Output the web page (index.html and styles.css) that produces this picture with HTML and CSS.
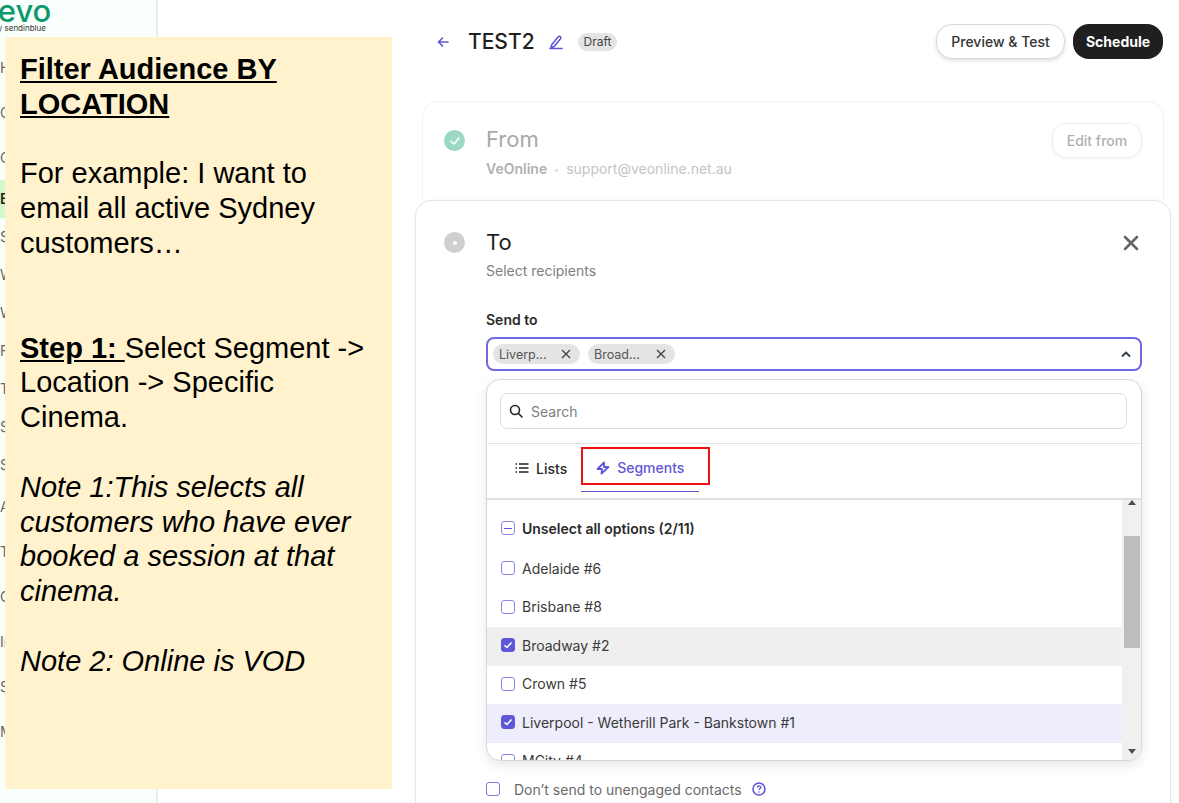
FILE: index.html
```html
<!DOCTYPE html>
<html lang="en">
<head>
<meta charset="UTF-8">
<meta name="viewport" content="width=device-width, initial-scale=1.0">
<title>TEST2 - Campaign</title>
<link rel="stylesheet" href="styles.css">
</head>
<body>

<aside class="sidebar">
    <div class="logo">
        <div class="logo-word">Brevo</div>
        <div class="logo-sub">by sendinblue</div>
    </div>
    <ul class="side-nav">
        <li>Home</li>
        <li>Contacts</li>
        <li>Campaigns</li>
        <li class="sub active">Email</li>
        <li class="sub">SMS</li>
        <li class="sub">WhatsApp</li>
        <li class="sub">Web push</li>
        <li class="sub">Facebook ads</li>
        <li class="sub">Templates</li>
        <li class="sub">Segments</li>
        <li class="sub">Statistics</li>
        <li>Automations</li>
        <li>Transactional</li>
        <li>Conversations</li>
        <li>Inbox</li>
        <li>Sales</li>
        <li>Meetings</li>
    </ul>
</aside>

<main class="main">
    <header class="top-bar">
        <svg class="back-icon" width="14" height="14" viewBox="0 0 14 14"><path d="M12 7H2.5M6.5 3 2.5 7l4 4" fill="none" stroke="#5f57d6" stroke-width="1.6" stroke-linecap="round" stroke-linejoin="round"/></svg>
        <h1 class="title">TEST2</h1>
        <svg class="edit-icon" width="16" height="16" viewBox="0 0 16 16"><path d="M3.5 11 10 3c.7-.8 1.6-.9 2.3-.3s.7 1.5.1 2.2L6 12.6l-3 .6zM2 14.5h12" fill="none" stroke="#5f57d6" stroke-width="1.6" stroke-linecap="round" stroke-linejoin="round"/></svg>
        <span class="draft-badge">Draft</span>
        <div class="top-actions">
            <button class="btn btn-light">Preview &amp; Test</button>
            <button class="btn btn-dark">Schedule</button>
        </div>
    </header>

    <section class="from-card">
        <span class="step-dot step-done">
            <svg width="12" height="12" viewBox="0 0 12 12"><path d="M2 6.3 5 9l5-6" fill="none" stroke="#fff" stroke-width="1.6" stroke-linecap="round" stroke-linejoin="round"/></svg>
        </span>
        <div class="from-text">
            <h2 class="from-title">From</h2>
            <p class="from-line"><b>VeOnline</b><i class="sep"></i>support@veonline.net.au</p>
        </div>
        <button class="edit-from">Edit from</button>
    </section>

    <section class="to-card">
        <div class="to-head">
            <span class="step-dot step-current"><i></i></span>
            <div class="to-text">
                <h2 class="to-title">To</h2>
                <p class="to-sub">Select recipients</p>
            </div>
            <svg class="close-icon" width="16" height="16" viewBox="0 0 16 16"><path d="M2 2l12 12M14 2 2 14" stroke="#666" stroke-width="2.6" stroke-linecap="round"/></svg>
        </div>

        <div class="send-block">
            <label class="send-label">Send to</label>
            <div class="send-field">
                <span class="chip">Liverp...<svg width="10" height="10" viewBox="0 0 10 10"><path d="M1 1l8 8M9 1 1 9" stroke="#444" stroke-width="1.4"/></svg></span>
                <span class="chip">Broad...<svg width="10" height="10" viewBox="0 0 10 10"><path d="M1 1l8 8M9 1 1 9" stroke="#444" stroke-width="1.4"/></svg></span>
                <svg class="chevron" width="10" height="7" viewBox="0 0 10 7"><path d="M1 5.5 5 1.5l4 4" fill="none" stroke="#2f3a4a" stroke-width="1.9"/></svg>
            </div>

            <div class="dropdown">
                <div class="search-wrap">
                    <div class="search-box">
                        <svg width="14" height="14" viewBox="0 0 14 14"><circle cx="6" cy="6" r="4.5" fill="none" stroke="#222" stroke-width="1.6"/><path d="M9.5 9.5 13 13" stroke="#222" stroke-width="1.6" stroke-linecap="round"/></svg>
                        <span>Search</span>
                    </div>
                </div>
                <div class="tabs">
                    <div class="tab">
                        <svg width="14" height="12" viewBox="0 0 14 12"><path d="M4 2h9.5M4 6h9.5M4 10h9.5" stroke="#222" stroke-width="1.4"/><path d="M.5 2h1.5M.5 6h1.5M.5 10h1.5" stroke="#222" stroke-width="1.6"/></svg>
                        Lists
                    </div>
                    <div class="tab tab-active">
                        <svg width="14" height="14" viewBox="0 0 14 14"><path d="M8 1.5 1.5 8H6l-.5 4.5L12.5 6H8z" fill="none" stroke="#5f57d6" stroke-width="1.8" stroke-linejoin="round"/></svg>
                        Segments
                    </div>
                    <div class="red-box"></div>
                </div>
                <div class="list-area">
                    <ul class="options">
                        <li class="option option-all"><span class="check check-some"></span>Unselect all options (2/11)</li>
                        <li class="option"><span class="check"></span>Adelaide #6</li>
                        <li class="option"><span class="check"></span>Brisbane #8</li>
                        <li class="option option-hover"><span class="check check-on"><svg width="10" height="10" viewBox="0 0 10 10"><path d="M1.5 5.3 4 7.5l4.5-5" fill="none" stroke="#fff" stroke-width="1.6"/></svg></span>Broadway #2</li>
                        <li class="option"><span class="check"></span>Crown #5</li>
                        <li class="option option-selected"><span class="check check-on"><svg width="10" height="10" viewBox="0 0 10 10"><path d="M1.5 5.3 4 7.5l4.5-5" fill="none" stroke="#fff" stroke-width="1.6"/></svg></span>Liverpool - Wetherill Park - Bankstown #1</li>
                        <li class="option"><span class="check"></span>MCity #4</li>
                    </ul>
                    <div class="scrollbar">
                        <span class="arrow arrow-up"></span>
                        <span class="thumb"></span>
                        <span class="arrow arrow-down"></span>
                    </div>
                </div>
            </div>
        </div>

        <div class="unengaged">
            <span class="check"></span>
            <span class="unengaged-text">Don’t send to unengaged contacts</span>
            <svg width="14" height="14" viewBox="0 0 14 14"><circle cx="7" cy="7" r="6" fill="none" stroke="#5f57d6" stroke-width="1.6"/><path d="M5.3 5.6c0-2.2 3.4-2.2 3.4-.1 0 1.3-1.7 1.3-1.7 2.6" fill="none" stroke="#5f57d6" stroke-width="1.4"/><circle cx="7" cy="10" r=".8" fill="#5f57d6"/></svg>
        </div>
    </section>
</main>

<div class="note">
    <h2 class="note-title">Filter Audience BY LOCATION</h2>
    <p class="note-para">For example: I want to email all active Sydney customers…</p>
    <p class="note-para note-step"><b>Step 1: </b>Select Segment -&gt; Location -&gt; Specific Cinema.</p>
    <p class="note-para"><em>Note 1:This selects all customers who have ever booked a session at that cinema.</em></p>
    <p class="note-para"><em>Note 2: Online is VOD</em></p>
</div>

</body>
</html>
```

FILE: styles.css
```css
* {
    box-sizing: border-box;
}

body {
    margin: 0;
    width: 1179px;
    height: 803px;
    overflow: hidden;
    display: flex;
    background-color: #fff;
    font-family: Inter, "Noto Sans", sans-serif;
    color: #1f1f1f;
    position: relative;
}

/* Left navigation, mostly hidden under the note */
.sidebar {
    width: 158px;
    flex-shrink: 0;
    height: 100%;
    overflow: hidden;
    background-color: #f9fffa;
    border-right: 2px solid #e2f0ea;
}

.logo {
    height: 45px;
    padding-top: 1px;
}

.logo-word {
    margin-left: -34px;
    margin-top: -8px;
    font-size: 31px;
    line-height: 36px;
    font-weight: 500;
    color: #0b996e;
}

.logo-sub {
    margin-top: -6px;
    margin-left: -7px;
    font-size: 8px;
    line-height: 10px;
    color: #333;
}

.side-nav {
    list-style: none;
    margin: 0;
    padding: 0;
    font-size: 14px;
    color: #666;
}

.side-nav li {
    height: 45px;
    line-height: 45px;
}

.side-nav li.sub {
    height: 38px;
    line-height: 38px;
}

.side-nav li.active {
    background-color: #d3f8cd;
    color: #1f1f1f;
    font-weight: 600;
}

/* Campaign column */
.main {
    flex: 1;
    padding: 24px 8px 0 257px;
}

.top-bar {
    display: flex;
    align-items: center;
    height: 35px;
    margin-left: 21px;
    margin-right: 8px;
}

.title {
    margin: 0 0 0 18px;
    font-size: 21px;
    font-weight: 500;
}

.edit-icon {
    margin-left: 13px;
}

.draft-badge {
    margin-left: 14px;
    padding: 0 6px;
    height: 18px;
    line-height: 18px;
    border-radius: 9px;
    background-color: #e4e4e4;
    font-size: 12px;
    color: #444;
}

.top-actions {
    margin-left: auto;
    display: flex;
    gap: 8px;
}

.btn {
    height: 35px;
    border-radius: 16px;
    font-family: inherit;
    font-size: 14px;
    font-weight: 500;
}

.btn-light {
    width: 129px;
    background-color: #fff;
    color: #333;
    border: 1px solid #d8d8d8;
    box-shadow: 0 2px 4px rgba(0, 0, 0, 0.12);
}

.btn-dark {
    width: 90px;
    background-color: #1f1f1f;
    color: #fff;
    border: 0;
    font-weight: 700;
}

.from-card {
    display: flex;
    height: 99px;
    margin: 42px 7px 0;
    padding: 21px 21px 0;
    border: 1px solid #f2f2f2;
    border-bottom: 0;
    border-radius: 16px 16px 0 0;
}

.step-dot {
    width: 21px;
    height: 21px;
    margin-top: 7px;
    border-radius: 50%;
    flex-shrink: 0;
    display: flex;
    align-items: center;
    justify-content: center;
}

.step-done {
    background-color: #9cd9c4;
}

.step-current {
    margin-top: 3px;
    background-color: #cfcfcf;
}

.step-current i {
    width: 4px;
    height: 4px;
    border-radius: 50%;
    background-color: #fff;
}

.from-text {
    margin-left: 21px;
}

.from-title {
    margin: -1px 0 0;
    font-size: 22px;
    line-height: 34px;
    font-weight: 400;
    color: #a8a8a8;
}

.from-line {
    margin: 3px 0 0;
    font-size: 14px;
    line-height: 20px;
    color: #c4c4c4;
}

.from-line b {
    font-weight: 600;
    color: #b0b0b0;
}

.sep {
    display: inline-block;
    width: 3px;
    height: 3px;
    margin: 0 8px;
    border-radius: 50%;
    background-color: #ddd;
    vertical-align: middle;
}

.edit-from {
    margin-left: auto;
    width: 90px;
    height: 35px;
    border: 1px solid #eee;
    border-radius: 14px;
    background-color: #fff;
    box-shadow: 0 1px 3px rgba(0, 0, 0, 0.05);
    font-family: inherit;
    font-size: 14px;
    font-weight: 500;
    color: #b0b0b0;
}

.to-card {
    height: 640px;
    padding: 28px 28px 0;
    border: 1px solid #e6e6e6;
    border-radius: 16px;
    background-color: #fff;
    box-shadow: 0 0 4px rgba(0, 0, 0, 0.04);
}

.to-head {
    display: flex;
    align-items: flex-start;
}

.to-text {
    margin-left: 21px;
    flex: 1;
}

.to-title {
    margin: 0;
    font-size: 22px;
    line-height: 27px;
    font-weight: 400;
}

.to-sub {
    margin: 4.5px 0 0;
    font-size: 14px;
    line-height: 20px;
    color: #808080;
}

.close-icon {
    margin-top: 6px;
    margin-right: 3px;
}

.send-block {
    margin: 29px 0 0 42px;
}

.send-label {
    display: block;
    font-size: 14px;
    line-height: 20px;
    font-weight: 600;
    color: #2a2a2a;
}

.send-field {
    display: flex;
    align-items: center;
    gap: 8px;
    height: 34px;
    margin-top: 7.5px;
    padding: 0 7px 0 5px;
    border: 2px solid #7068e0;
    border-radius: 8px;
}

.chip {
    display: flex;
    align-items: center;
    justify-content: space-between;
    width: 87px;
    height: 20px;
    padding: 0 9px 0 6px;
    border-radius: 10px;
    background-color: #e4e4e4;
    font-size: 12.5px;
    color: #555;
}

.chevron {
    margin-left: auto;
    margin-right: 2px;
}

.dropdown {
    height: 382px;
    margin-top: 8px;
    border: 1px solid #d8d8d8;
    border-radius: 14px;
    overflow: hidden;
    box-shadow: 0 4px 12px rgba(0, 0, 0, 0.1);
    background-color: #fff;
}

.search-wrap {
    height: 64px;
    padding: 13px 14px 0 13px;
    border-bottom: 1px solid #e4e4e4;
}

.search-box {
    display: flex;
    align-items: center;
    gap: 8px;
    height: 36px;
    padding-left: 8px;
    border: 1px solid #dedede;
    border-radius: 7px;
    font-size: 14px;
    color: #808080;
}

.tabs {
    position: relative;
    display: flex;
    height: 56px;
    padding-left: 28px;
    border-bottom: 2px solid #e0e0e0;
}

.tab {
    display: flex;
    align-items: center;
    gap: 7px;
    height: 48px;
    font-size: 14px;
    font-weight: 500;
    color: #2a2a2a;
}

.tab-active {
    width: 118px;
    margin-left: 14px;
    padding-left: 15px;
    border-bottom: 1px solid #5f57d6;
    color: #5f57d6;
}

.red-box {
    position: absolute;
    left: 94px;
    top: 3px;
    width: 129px;
    height: 38px;
    border: 2px solid #ee1111;
}

.list-area {
    display: flex;
    height: 261px;
}

.options {
    flex: 1;
    list-style: none;
    margin: 0;
    padding: 9px 0 0;
    overflow: hidden;
    font-size: 14px;
    color: #3a3a3a;
}

.option {
    display: flex;
    align-items: center;
    gap: 7px;
    height: 38.5px;
    padding: 0 0 2px 14px;
    flex-shrink: 0;
}

.option-all {
    margin-bottom: 2.5px;
    padding-bottom: 0;
    font-weight: 600;
    color: #2a2a2a;
}

.option-hover {
    background-color: #efefef;
}

.option-selected {
    background-color: #eeedfb;
}

.check {
    width: 14px;
    height: 14px;
    flex-shrink: 0;
    border: 1px solid #8d86e6;
    border-radius: 3px;
    background-color: #fff;
    display: flex;
    align-items: center;
    justify-content: center;
}

.check-on {
    background-color: #5f57d6;
    border-color: #5f57d6;
}

.check-some::before {
    content: "";
    width: 8px;
    height: 1.5px;
    background-color: #5f57d6;
}

.scrollbar {
    width: 19px;
    display: flex;
    flex-direction: column;
    align-items: center;
    background-color: #f0f0f0;
}

.thumb {
    width: 16px;
    height: 112px;
    margin-top: 31px;
    background-color: #bdbdbd;
}

.arrow {
    width: 0;
    height: 0;
    border-left: 4.5px solid transparent;
    border-right: 4.5px solid transparent;
}

.arrow-up {
    border-bottom: 5px solid #505050;
}

.arrow-down {
    margin-top: auto;
    margin-bottom: 7px;
    border-top: 5px solid #505050;
}

.unengaged {
    display: flex;
    align-items: center;
    height: 20px;
    margin: 18px 0 0 42px;
    font-size: 14px;
    color: #6a6a6a;
}

.unengaged .check {
    border-color: #7f78e2;
}

.unengaged-text {
    margin: 0 10px 0 14px;
}

/* Slide note pasted over the app */
.note {
    position: absolute;
    left: 5px;
    top: 37px;
    width: 387px;
    height: 752px;
    padding: 15px 15px 0;
    background-color: #fff2cc;
    font-family: "Liberation Sans", Arial, sans-serif;
    font-size: 29px;
    line-height: 34.82px;
    color: #000;
}

.note-title {
    margin: 0;
    font-size: 29px;
    font-weight: 700;
    text-decoration: underline;
}

.note-para {
    margin: 34.82px 0 0;
}

.note-para b {
    text-decoration: underline;
}

.note-step {
    margin-top: 69.64px;
}
```
